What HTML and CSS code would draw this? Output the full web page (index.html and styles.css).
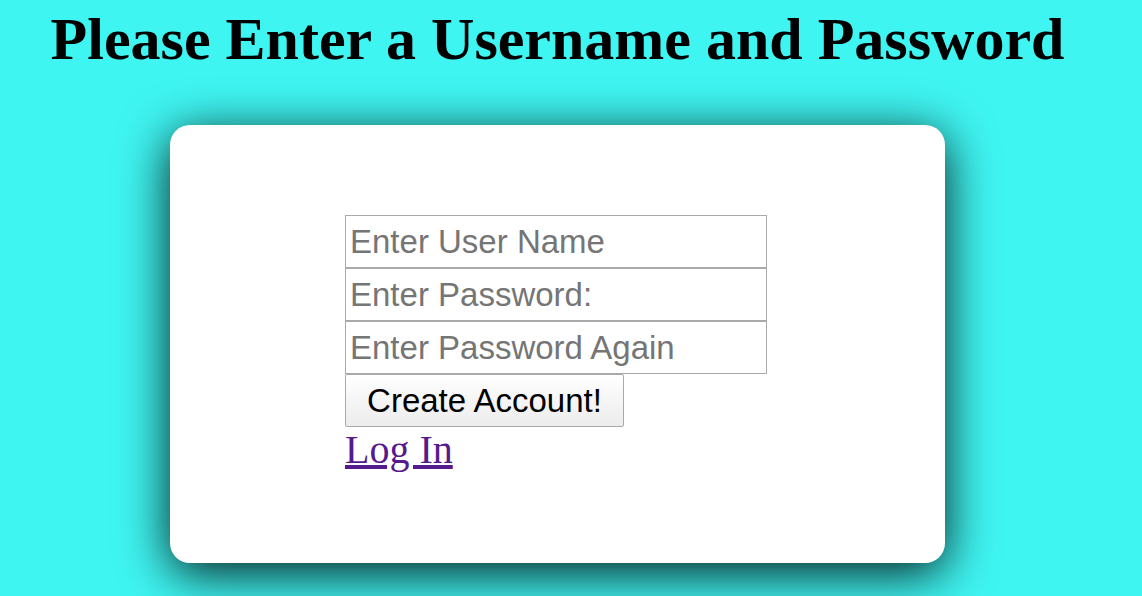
FILE: index.html
```html
<!DOCTYPE html>
<html>
<head>
<meta charset="utf-8">
<title>Create Account</title>
<link rel="stylesheet" href="styles.css">
</head>
<body>
<div class="page">
  <h1 class="title">Please Enter a Username and Password</h1>
  <div class="card">
    <form class="form">
      <input class="field" type="text" placeholder="Enter User Name">
      <input class="field" type="password" placeholder="Enter Password:">
      <input class="field" type="password" placeholder="Enter Password Again">
      <button class="btn" type="button">Create Account!</button>
      <a class="link" href="#">Log In</a>
    </form>
  </div>
</div>
</body>
</html>
```

FILE: styles.css
```css
html, body {
  margin: 0;
  padding: 0;
  height: 100%;
  overflow: hidden;
}
body {
  background: #3ff5f2;
  font-family: "Liberation Serif", "Times New Roman", serif;
}
.page {
  width: 1115px;
  display: flex;
  flex-direction: column;
  align-items: center;
}
.title {
  margin: 5px 0 0;
  font-size: 60px;
  font-weight: bold;
  line-height: 69px;
  color: #000;
  text-align: center;
}
.card {
  margin-top: 51px;
  width: 775px;
  height: 438px;
  box-sizing: border-box;
  padding: 90px 0 0 175px;
  background: #fff;
  border-radius: 20px;
  box-shadow: 0 10px 50px rgba(0, 0, 0, 0.9);
}
.form {
  display: flex;
  flex-direction: column;
  align-items: flex-start;
}
.field {
  display: block;
  width: 422px;
  height: 53px;
  box-sizing: border-box;
  margin: 0;
  padding: 0 4px;
  border: 1px solid #a9a9a9;
  border-radius: 0;
  font-family: "Liberation Sans", Arial, sans-serif;
  font-size: 33px;
  color: #000;
  background: #fff;
  outline: none;
}
.field::placeholder {
  color: #757575;
}
.btn {
  display: block;
  width: 279px;
  height: 53px;
  box-sizing: border-box;
  margin: 0;
  padding: 0;
  border: 1px solid #a9a9a9;
  border-radius: 2px;
  background: linear-gradient(#ffffff, #ececec);
  font-family: "Liberation Sans", Arial, sans-serif;
  font-size: 33px;
  color: #000;
  text-align: center;
}
.link {
  font-family: "Liberation Serif", "Times New Roman", serif;
  font-size: 40px;
  line-height: 46px;
  color: #551a8b;
  text-decoration: underline;
}
```
